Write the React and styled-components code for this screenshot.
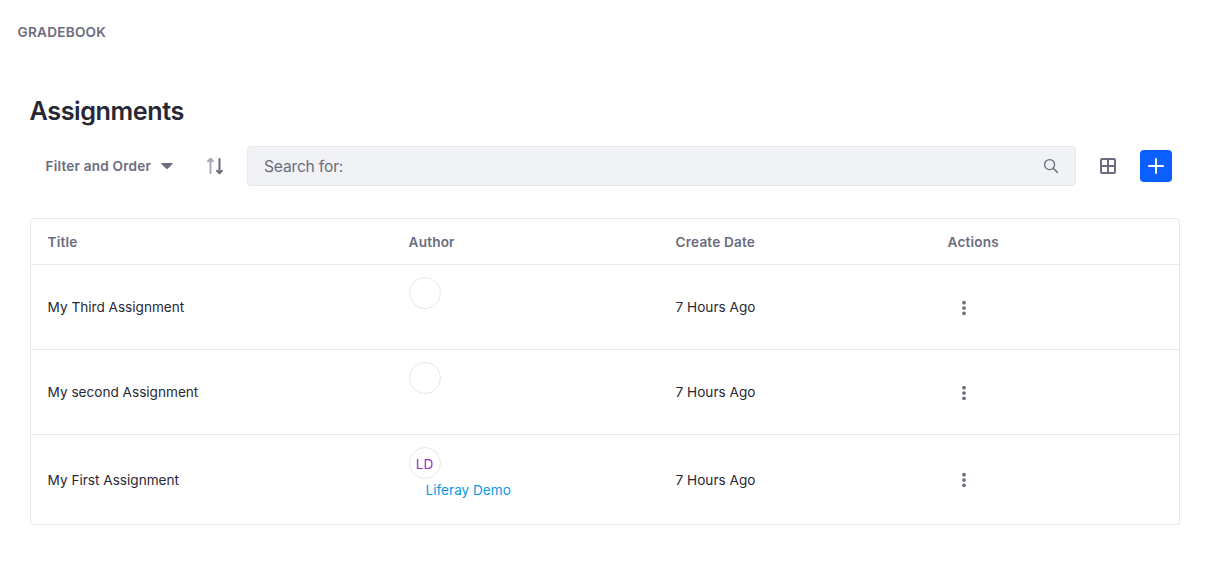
import React from "react";
import styled, { createGlobalStyle } from "styled-components";

const GlobalStyle = createGlobalStyle`
  * { box-sizing: border-box; }
  body {
    margin: 0;
    background: #fff;
    color: #272833;
    font-family: Inter, "Liberation Sans", sans-serif;
    font-size: 13.6px;
    line-height: 21px;
  }
  button { font: inherit; border: 0; padding: 0; background: none; cursor: pointer; }
`;

const Page = styled.div`
  height: 570px;
  overflow: hidden;
`;

const Brand = styled.header`
  padding: 22px 17.5px 0;
  height: 64px;
  color: #6b6c7e;
  font-weight: 600;
  letter-spacing: 0.24px;
`;

const Main = styled.main`
  width: 1150px;
  margin-left: 30px;
`;

const Heading = styled.h1`
  margin: 0 0 0 -0.5px;
  padding-top: 31px;
  height: 82px;
  font-size: 25.2px;
  line-height: 32px;
  font-weight: 600;
  letter-spacing: -0.42px;
`;

const Toolbar = styled.div`
  display: flex;
  align-items: center;
  height: 40px;
  color: #6b6c7e;
`;

const FilterButton = styled.button`
  display: flex;
  align-items: center;
  gap: 11px;
  width: 161px;
  padding-left: 15.5px;
  color: #6b6c7e;
  font-weight: 600;
  white-space: nowrap;
`;

const FilterLabel = styled.span`
  width: 104.5px;
  padding-top: 1px;
  text-align: left;
  letter-spacing: 0.2px;
`;

const IconButton = styled.button`
  display: flex;
  align-items: center;
  justify-content: center;
  width: 32px;
  height: 32px;
  border-radius: 4px;
  color: ${(p) => (p.$primary ? "#fff" : "#6b6c7e")};
  background: ${(p) => (p.$primary ? "#0b5fff" : "transparent")};
`;

const SortButton = styled(IconButton)`
  width: 48px;
  margin-right: 8px;
`;

const Search = styled.div`
  display: flex;
  align-items: center;
  justify-content: space-between;
  width: 829px;
  height: 40px;
  padding: 0 16px;
  margin-right: 16px;
  border: 1px solid #e7e7ed;
  border-radius: 4px;
  background: #f1f2f5;
  font-size: 15.6px;
  letter-spacing: -0.18px;
`;

const PrimarySlot = styled.div`
  margin-left: 16px;
`;

const Table = styled.div`
  margin-top: 32px;
  border: 1px solid #e7e7ed;
  border-radius: 4px 4px 0 4px;
`;

const Row = styled.div`
  display: grid;
  grid-template-columns: 361px 267px 272px 1fr;
  align-items: center;
  height: ${(p) => p.$height}px;
  & + & { border-top: 1px solid #e7e7ed; }
`;

const HeadCell = styled.div`
  padding: 2px 0 0 16.6px;
  color: #6b6c7e;
  font-weight: 600;
  letter-spacing: 0.17px;
`;

const Cell = styled.div`
  padding: 1px 0 0 16.6px;
`;

const AuthorCell = styled.div`
  align-self: start;
  padding: 12px 0 0 17px;
`;

const Avatar = styled.div`
  display: flex;
  align-items: center;
  justify-content: center;
  width: 32px;
  height: 32px;
  border: 1px solid #e7e7ed;
  border-radius: 50%;
  color: #9b32c0;
  padding: 2px 1px 0 0;
`;

const AuthorLink = styled.a`
  display: block;
  padding: 1px 0 0 16.5px;
  color: #0b9ae3;
`;

const SortIcon = () => (
  <svg width="18" height="18" viewBox="0 0 18 18" fill="none" strokeWidth="2" strokeLinecap="round" strokeLinejoin="round">
    <path d="M4.5 16V2M2 4.2 4.5 1.8 7 4.2" stroke="#a7a9bc" />
    <path d="M13.5 2v14M11 13.8l2.5 2.4 2.5-2.4" stroke="#6b6c7e" />
  </svg>
);

const CaretIcon = () => (
  <svg width="12" height="6" viewBox="0 0 12 6">
    <path d="M1 0h10c.7 0 .9.6.5 1L7 5.5c-.6.6-1.400.6-2 0L.5 1C.1.600.300 0 1 0z" fill="currentColor" />
  </svg>
);

const SearchIcon = () => (
  <svg width="16" height="16" viewBox="0 0 16 16" fill="none" stroke="currentColor">
    <circle cx="6.600" cy="6.600" r="5" strokeWidth="1.300" />
    <path d="m10.200 10.200 4.100 4.100" strokeWidth="1.600" strokeLinecap="round" />
  </svg>
);

const GridIcon = () => (
  <svg width="16" height="16" viewBox="0 0 16 16" fill="none" stroke="currentColor" strokeWidth="2">
    <rect x="1" y="1" width="14" height="14" rx="1" />
    <path d="M8 1v14M1 8h14" />
  </svg>
);

const PlusIcon = () => (
  <svg width="16" height="16" viewBox="0 0 16 16" stroke="currentColor" strokeWidth="2" strokeLinecap="round">
    <path d="M8 1v14M1 8h14" />
  </svg>
);

const DotsIcon = () => (
  <svg width="16" height="16" viewBox="0 0 16 16" fill="currentColor">
    <circle cx="8" cy="2.700" r="1.850" />
    <circle cx="8" cy="8" r="1.850" />
    <circle cx="8" cy="13.300" r="1.850" />
  </svg>
);

const ActionCell = styled.div`
  padding: 1px 0 0 17px;
`;

const rows = [
  { title: "My Third Assignment", date: "7 Hours Ago", height: 85 },
  { title: "My second Assignment", date: "7 Hours Ago", height: 85 },
  { title: "My First Assignment", date: "7 Hours Ago", height: 90, author: "Liferay Demo", initials: "LD" },
];

export default function App() {
  return (
    <Page>
      <GlobalStyle />
      <Brand>GRADEBOOK</Brand>
      <Main>
        <Heading>Assignments</Heading>
        <Toolbar>
          <FilterButton>
            <FilterLabel>Filter and Order</FilterLabel>
            <CaretIcon />
          </FilterButton>
          <SortButton aria-label="Sort"><SortIcon /></SortButton>
          <Search>
            <span>Search for:</span>
            <SearchIcon />
          </Search>
          <IconButton aria-label="View"><GridIcon /></IconButton>
          <PrimarySlot>
            <IconButton $primary aria-label="Add"><PlusIcon /></IconButton>
          </PrimarySlot>
        </Toolbar>
        <Table>
          <Row $height={45}>
            <HeadCell>Title</HeadCell>
            <HeadCell>Author</HeadCell>
            <HeadCell>Create Date</HeadCell>
            <HeadCell>Actions</HeadCell>
          </Row>
          {rows.map((r) => (
            <Row key={r.title} $height={r.height}>
              <Cell>{r.title}</Cell>
              <AuthorCell>
                <Avatar>{r.initials}</Avatar>
                {r.author && <AuthorLink>{r.author}</AuthorLink>}
              </AuthorCell>
              <Cell>{r.date}</Cell>
              <ActionCell>
                <IconButton aria-label="Actions"><DotsIcon /></IconButton>
              </ActionCell>
            </Row>
          ))}
        </Table>
      </Main>
    </Page>
  );
}
